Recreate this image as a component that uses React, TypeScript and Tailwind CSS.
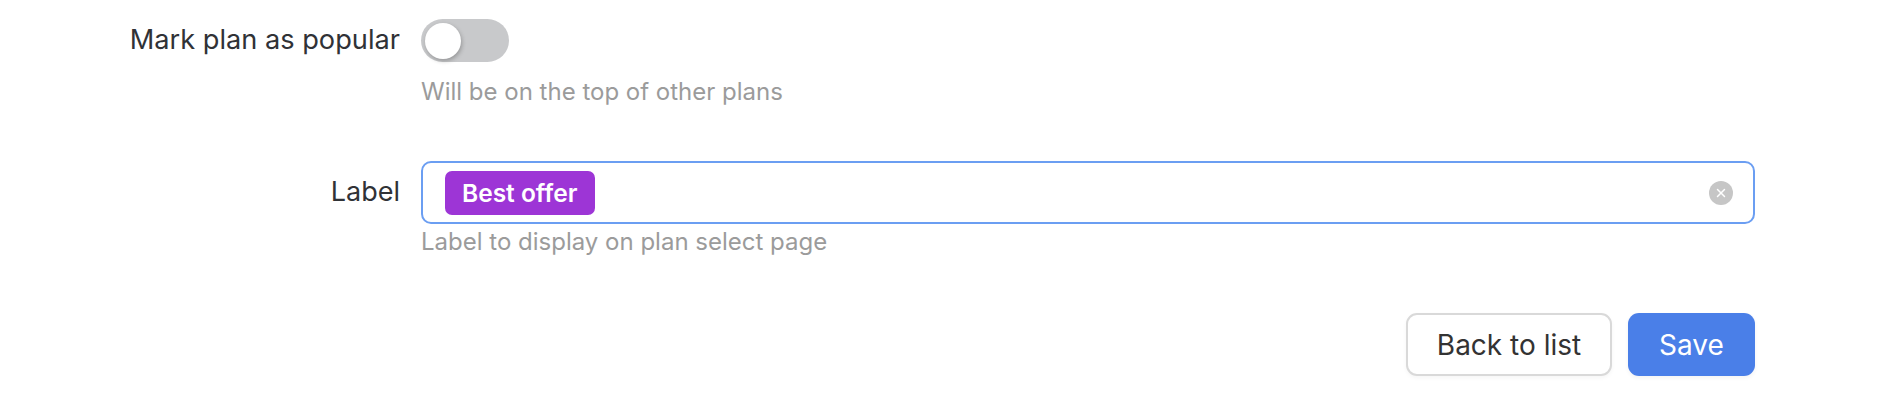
import { X } from "lucide-react";

function Toggle() {
  return (
    <button
      type="button"
      className="flex h-[43px] w-[88px] shrink-0 items-center rounded-full bg-[#c8c9cb] px-[4px]"
    >
      <span className="h-[36px] w-[36px] rounded-full bg-white shadow-[1px_2px_4px_rgba(0,0,0,0.25)]" />
    </button>
  );
}

export default function App() {
  return (
    <div className="min-h-[406px] w-full bg-white px-[131px] pt-[19px] font-['Inter',sans-serif] text-[#303236]">
      {/* Popular switch */}
      <div className="grid grid-cols-[269px_1fr] gap-x-[21px]">
        <div className="flex h-[43px] items-center justify-end whitespace-nowrap text-[27.2px]">Mark plan as popular</div>
        <div>
          <Toggle />
          <p className="mt-[16px] text-[24px] leading-[28px] text-[#9b9b9b]">Will be on the top of other plans</p>
        </div>
      </div>

      {/* Label */}
      <div className="mt-[55px] grid grid-cols-[269px_1fr] gap-x-[21px]">
        <div className="flex h-[63px] items-center justify-end text-[27px]">Label</div>
        <div>
          <div className="flex h-[63px] items-center rounded-[10px] border-2 border-[#6b9ef2] pl-[22px] pr-[20px]">
            <span className="flex h-[44px] items-center rounded-[7px] bg-[#9d35d6] px-[17px] pt-[2px] text-[24.5px] font-semibold text-white">
              Best offer
            </span>
            <span className="ml-auto flex h-[24px] w-[24px] items-center justify-center rounded-full bg-[#c6c6c6]">
              <X size={14} strokeWidth={2.5} className="text-white" />
            </span>
          </div>
          <p className="mt-[4px] text-[24px] leading-[28px] text-[#9b9b9b]">Label to display on plan select page</p>
        </div>
      </div>

      {/* Actions */}
      <div className="mt-[57px] flex justify-end gap-[16px]">
        <button
          type="button"
          className="h-[63px] w-[206px] rounded-[11px] border-2 border-[#d9d9d9] bg-white text-[28px] text-[#333] shadow-[0_2px_4px_rgba(0,0,0,0.04)]"
        >
          Back to list
        </button>
        <button
          type="button"
          className="h-[63px] w-[127px] rounded-[11px] bg-[#4a7fe8] text-[28px] text-white shadow-[0_2px_4px_rgba(0,0,0,0.05)]"
        >
          Save
        </button>
      </div>
    </div>
  );
}
